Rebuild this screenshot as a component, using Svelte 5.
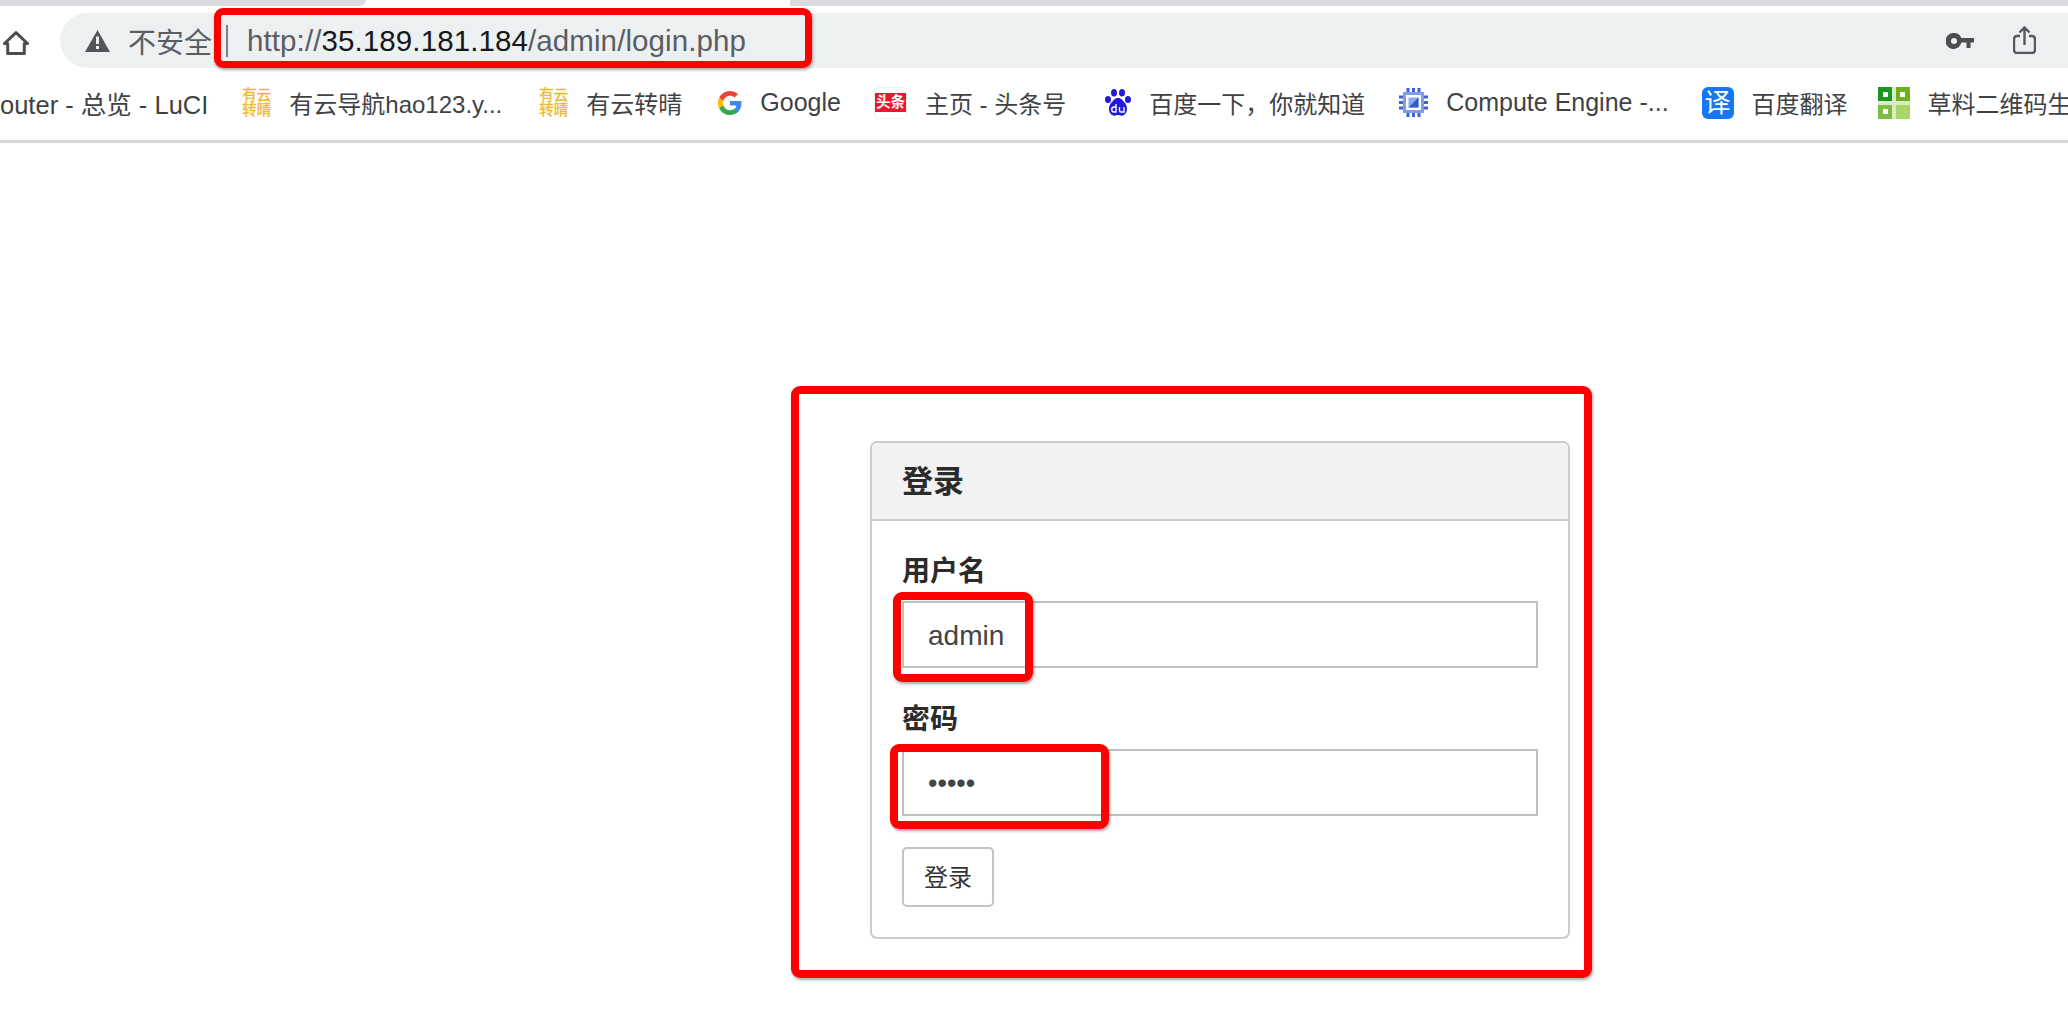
<script lang="ts">
	// shift: extra space before the item, the favicons are not evenly spaced in the bar
	const bookmarks = [
		{ icon: '', label: 'outer - 总览 - LuCI', size: 'mixed', shift: 0 },
		{ icon: 'cloud', label: '有云导航hao123.y...', size: '', shift: 0 },
		{ icon: 'cloud', label: '有云转晴', size: '', shift: 3 },
		{ icon: 'google', label: 'Google', size: 'latin', shift: 2 },
		{ icon: 'toutiao', label: '主页 - 头条号', size: '', shift: -1 },
		{ icon: 'baidu', label: '百度一下，你就知道', size: '', shift: 5 },
		{ icon: 'chip', label: 'Compute Engine -...', size: 'latin', shift: 0 },
		{ icon: 'fanyi', label: '百度翻译', size: '', shift: -1 },
		{ icon: 'qr', label: '草料二维码生', size: '', shift: -4 }
	];
</script>

<div class="page">
	<div class="tabstrip">
		<span class="tab-gray left"></span>
		<span class="tab-active"></span>
		<span class="tab-gray"></span>
	</div>

	<header class="toolbar">
		<svg class="home" viewBox="0 0 26 24" aria-hidden="true">
			<path d="M1.500 12.500 13 1.700l11.500 10.800h-3.200v10H4.700v-10z" fill="none" stroke="#4a4d51" stroke-width="3" stroke-linejoin="round" />
		</svg>
		<div class="omnibox">
			<svg class="warn" viewBox="0 0 25 22" aria-hidden="true">
				<path d="M12.500 0 25 22H0z" fill="#50555a" />
				<rect x="11" y="6.500" width="3" height="7.500" fill="#edf0f1" />
				<rect x="11" y="16" width="3" height="3" fill="#edf0f1" />
			</svg>
			<span class="insecure">不安全</span>
			<span class="caret"></span>
			<span class="url">http://<b>35.189.181.184</b>/admin/login.php</span>
			<svg class="key" viewBox="0 0 28 16" aria-hidden="true">
				<path fill-rule="evenodd" d="M8 0a8 8 0 0 1 7.400 5H28v4.500h-3.500V15h-4V9.500h-5.100A8 8 0 1 1 8 0zm0 5a3 3 0 1 0 0 6 3 3 0 0 0 0-6z" fill="#4a4d51" />
			</svg>
			<svg class="share" viewBox="0 0 23 28" aria-hidden="true">
				<path d="M7 10H4a3 3 0 0 0-3 3v11a3 3 0 0 0 3 3h15a3 3 0 0 0 3-3V13a3 3 0 0 0-3-3h-3M11.500 19V2M6.500 6.500l5-5 5 5" fill="none" stroke="#54585c" stroke-width="2.400" />
			</svg>
		</div>
	</header>

	<nav class="bookmarks">
		{#each bookmarks as b}
			<div class="bookmark {b.size}" style="margin-left: {b.shift}px">
				{#if b.icon === 'cloud'}
					<span class="fav-cloud"><i>有云</i><i>转晴</i></span>
				{:else if b.icon === 'google'}
					<svg class="fav" viewBox="0 0 24 24" aria-hidden="true">
						<path d="M23.500 12.300c0-.9-.1-1.600-.2-2.300H12v4.400h6.500a5.600 5.600 0 0 1-2.400 3.600v3h3.900c2.200-2.100 3.500-5.100 3.500-8.700z" fill="#4285f4" />
						<path d="M12 24c3.200 0 6-1.100 8-2.900l-3.900-3c-1.100.7-2.500 1.200-4.100 1.200-3.100 0-5.800-2.100-6.700-5H1.300v3.100A12 12 0 0 0 12 24z" fill="#34a853" />
						<path d="M5.300 14.300a7.200 7.200 0 0 1 0-4.600V6.600h-4a12 12 0 0 0 0 10.800z" fill="#fbbc05" />
						<path d="M12 4.700c1.800 0 3.300.6 4.600 1.800L20 3.100A11.600 11.600 0 0 0 12 0 12 12 0 0 0 1.300 6.600l4 3.100c.9-2.900 3.600-5 6.700-5z" fill="#ea4335" />
					</svg>
				{:else if b.icon === 'toutiao'}
					<span class="fav-toutiao"><span>头条</span></span>
				{:else if b.icon === 'baidu'}
					<svg class="fav-baidu" viewBox="0 0 26 27" aria-hidden="true">
						<ellipse cx="9" cy="3.800" rx="3" ry="3.800" fill="#2319dc" />
						<ellipse cx="17" cy="3.800" rx="3" ry="3.800" fill="#2319dc" />
						<ellipse cx="3" cy="10.500" rx="3" ry="3.600" fill="#2319dc" />
						<ellipse cx="23" cy="10.500" rx="3" ry="3.600" fill="#2319dc" />
						<path d="M13 9c3.500 0 4.500 2.500 7 5 3 3 3 12-3 12.700-1.500.2-2.800-.7-4-.7s-2.500.9-4 .7c-6-.7-6-9.700-3-12.700 2.500-2.500 3.500-5 7-5z" fill="#2319dc" />
						<path d="M11 15v8H9a2.200 2.200 0 0 1-2.200-2.200v-.6A2.200 2.200 0 0 1 9 18h2M14.500 18v3.500c0 1 .7 1.500 1.500 1.500h3v-5" fill="none" stroke="#fff" stroke-width="1.400" />
					</svg>
				{:else if b.icon === 'chip'}
					<svg class="fav-chip" viewBox="0 0 29 29" aria-hidden="true">
						<path d="M9 0v29M14.500 0v29M20 0v29M0 9h29M0 14.500h29M0 20h29" stroke="#3f62d2" stroke-width="3" />
						<rect x="4" y="4" width="21" height="21" fill="#7f9de8" />
						<rect x="7" y="7" width="15" height="15" fill="#fff" />
						<path d="M9.500 9.500h10v10h-10z" fill="#8fa8ee" />
						<path d="M19.500 9.500v10h-10z" fill="#3558cc" />
					</svg>
				{:else if b.icon === 'fanyi'}
					<span class="fav-fanyi">译</span>
				{:else if b.icon === 'qr'}
					<svg class="fav-qr" viewBox="0 0 32 32" aria-hidden="true">
						<path d="M0 0h14v14H0z" fill="#1d961f" />
						<path d="M18 0h14v14H18z" fill="#6eb01e" />
						<path d="M0 18h14v14H0z" fill="#7fbb42" />
						<path d="M18 18h14v14H18z" fill="#a8d768" />
						<path d="M14 0h4v32h-4zM0 14h32v4H0z" fill="#d9edc4" />
						<path d="M5 5h5v5H5zM22 5h5v5h-5zM5 22h5v5H5z" fill="#fff" />
					</svg>
				{/if}
				<span>{b.label}</span>
			</div>
		{/each}
	</nav>

	<main class="content">
		<section class="card">
			<h3 class="card-title">登录</h3>
			<form class="card-body">
				<label for="username">用户名</label>
				<input id="username" type="text" value="admin" readonly />
				<label for="password">密码</label>
				<input id="password" type="password" value="admin" readonly />
				<button type="button">登录</button>
			</form>
		</section>
	</main>

	<!-- screenshot annotations drawn on top -->
	<div class="mark mark-url"></div>
	<div class="mark mark-form"></div>
	<div class="mark mark-user"></div>
	<div class="mark mark-pass"></div>
</div>

<style>
	:global(body) {
		margin: 0;
		background: #fff;
	}

	.page {
		position: relative;
		width: 2068px;
		height: 1016px;
		overflow: hidden;
		font-family: 'Liberation Sans', 'Noto Sans CJK SC', sans-serif;
		color: #333;
	}

	.tabstrip {
		display: flex;
		height: 6px;
	}

	.tab-gray {
		flex: 1;
		background: #d9dbdf;
	}

	.tab-gray.left {
		flex: 0 0 366px;
		border-bottom-right-radius: 6px;
	}

	.tab-active {
		flex: 0 0 424px;
	}

	.toolbar {
		display: flex;
		align-items: center;
		height: 69px;
		padding-left: 3px;
		box-sizing: border-box;
	}

	.home {
		width: 26px;
		height: 24px;
		flex: none;
		margin-top: 5px;
	}

	.omnibox {
		display: flex;
		align-items: center;
		flex: 1;
		height: 55px;
		margin-left: 31px;
		padding-left: 25px;
		border-radius: 28px 0 0 28px;
		background: #edf0f1;
		color: #5a5e63;
	}

	.warn {
		width: 25px;
		height: 22px;
		flex: none;
	}

	.insecure {
		margin-left: 18px;
		font-size: 28px;
	}

	.caret {
		width: 2px;
		height: 32px;
		margin-left: 14px;
		background: #7d8184;
	}

	.url {
		margin-left: 19px;
		font-size: 29.500px;
		letter-spacing: 0.1px;
		color: #5a5e63;
	}

	.url b {
		font-weight: 400;
		color: #17181a;
	}

	.key {
		width: 28px;
		height: 16px;
		margin-left: auto;
	}

	.share {
		width: 23px;
		height: 28px;
		margin: -2px 32px 0 39px;
	}

	.bookmarks {
		display: flex;
		align-items: center;
		gap: 34px;
		height: 55px;
		padding-bottom: 10px;
		border-bottom: 3px solid #d6d6d6;
		font-size: 24px;
		color: #3f4245;
		white-space: nowrap;
	}

	.bookmark {
		display: flex;
		align-items: center;
		gap: 18px;
		flex: none;
	}

	.bookmark.mixed {
		font-size: 25.500px;
	}

	.bookmark.latin {
		font-size: 25px;
	}

	.fav-cloud {
		display: flex;
		flex-direction: column;
		width: 29px;
		font-size: 14.500px;
		line-height: 15px;
		color: #ecb92f;
		-webkit-text-stroke: 0.3px #ecb92f;
	}

	.fav-cloud i {
		font-style: normal;
	}

	.fav {
		width: 24px;
		height: 24px;
	}

	.fav-toutiao {
		display: flex;
		align-items: center;
		box-sizing: border-box;
		width: 33px;
		height: 32px;
		border: 1px solid #f0f0f0;
		border-radius: 5px;
	}

	.fav-toutiao span {
		width: 100%;
		background: #f2142c;
		color: #fff;
		font-size: 14.500px;
		line-height: 19px;
		font-weight: 700;
		text-align: center;
	}

	.fav-baidu {
		width: 26px;
		height: 27px;
	}

	.fav-chip {
		width: 29px;
		height: 29px;
	}

	.fav-fanyi {
		width: 32px;
		height: 32px;
		border-radius: 6px;
		background: #1677f5;
		color: #fff;
		font-size: 26px;
		line-height: 32px;
		text-align: center;
	}

	.fav-qr {
		width: 32px;
		height: 32px;
	}

	.content {
		padding: 298px 0 0 870px;
	}

	.card {
		box-sizing: border-box;
		width: 700px;
		height: 498px;
		border: 2px solid #ccc;
		border-radius: 7px;
		overflow: hidden;
	}

	.card-title {
		margin: 0;
		padding: 2px 30px 0;
		height: 74px;
		line-height: 74px;
		border-bottom: 2px solid #ccc;
		background: #f2f2f2;
		font-size: 31px;
		font-weight: 700;
		color: #2b2b2b;
	}

	.card-body {
		display: flex;
		flex-direction: column;
		align-items: flex-start;
		padding: 31px 30px 0;
	}

	label {
		padding-top: 2px;
		font-size: 28px;
		line-height: 36px;
		font-weight: 700;
		color: #2b2b2b;
	}

	input {
		box-sizing: border-box;
		width: 636px;
		height: 67px;
		margin: 11px 0 32px;
		padding: 2px 24px 0;
		border: 2px solid #bfbfbf;
		background: #fff;
		font-family: inherit;
		font-size: 28px;
		color: #444;
		outline: none;
	}

	input[type='password'] {
		font-size: 27px;
		margin-bottom: 31px;
	}

	button {
		width: 92px;
		height: 60px;
		padding: 0 0 3px;
		border: 2px solid #c4c4c4;
		border-radius: 5px;
		background: #fff;
		font-family: inherit;
		font-size: 24px;
		color: #333;
	}

	.mark {
		position: absolute;
		box-sizing: border-box;
		border: 8px solid #fe0000;
		border-radius: 9px;
		box-shadow: 1px 2px 3px rgba(0, 0, 0, 0.35);
	}

	.mark-url {
		left: 214px;
		top: 8px;
		width: 598px;
		height: 60px;
		border-width: 7px;
	}

	.mark-form {
		left: 791px;
		top: 386px;
		width: 801px;
		height: 592px;
	}

	.mark-user {
		left: 893px;
		top: 592px;
		width: 140px;
		height: 90px;
	}

	.mark-pass {
		left: 890px;
		top: 744px;
		width: 219px;
		height: 85px;
	}
</style>
